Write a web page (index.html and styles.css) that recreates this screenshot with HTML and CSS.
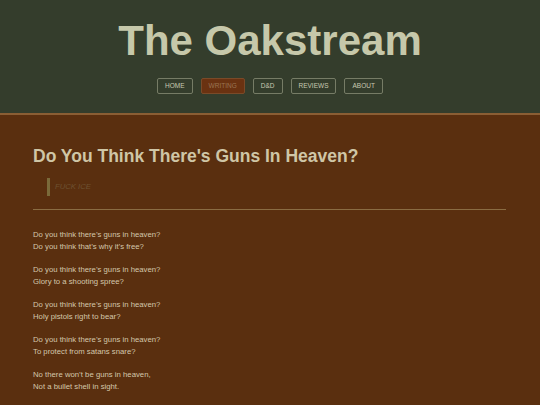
FILE: index.html
```html
<!DOCTYPE html>
<html lang="en">
<head>
<meta charset="utf-8">
<title>The Oakstream</title>
<link rel="stylesheet" href="styles.css">
</head>
<body>
<header class="site-header">
  <h1 class="site-title">The Oakstream</h1>
  <nav class="nav">
    <a class="nav-btn" href="#">HOME</a>
    <a class="nav-btn active" href="#">WRITING</a>
    <a class="nav-btn" href="#">D&amp;D</a>
    <a class="nav-btn" href="#">REVIEWS</a>
    <a class="nav-btn" href="#">ABOUT</a>
  </nav>
</header>
<main class="content">
  <h2 class="post-title">Do You Think There's Guns In Heaven?</h2>
  <blockquote class="post-quote">FUCK ICE</blockquote>
  <hr class="divider">
  <div class="poem">
    <p>Do you think there’s guns in heaven?<br>Do you think that’s why it’s free?</p>
    <p>Do you think there’s guns in heaven?<br>Glory to a shooting spree?</p>
    <p>Do you think there’s guns in heaven?<br>Holy pistols right to bear?</p>
    <p>Do you think there’s guns in heaven?<br>To protect from satans snare?</p>
    <p>No there won’t be guns in heaven,<br>Not a bullet shell in sight.</p>
  </div>
</main>
</body>
</html>
```
FILE: styles.css
```css
html, body {
  margin: 0;
  padding: 0;
}
body {
  font-family: "Liberation Sans", Arial, Helvetica, sans-serif;
  background: #5a2f0f;
  height: 405px;
  overflow: hidden;
}
.site-header {
  background: #343d2c;
  border-bottom: 2px solid #8a5e34;
  padding: 17px 0 19px;
  display: flex;
  flex-direction: column;
  align-items: center;
}
.site-title {
  margin: 0;
  font-size: 42px;
  line-height: 48px;
  font-weight: bold;
  color: #c6c8aa;
}
.nav {
  display: flex;
  gap: 8px;
  margin-top: 13px;
}
.nav-btn {
  display: block;
  height: 14px;
  line-height: 14px;
  padding: 0 7px;
  border: 1px solid #767c66;
  border-radius: 2px;
  font-size: 6.5px;
  color: #c8c9b2;
  text-decoration: none;
}
.nav-btn.active {
  background: #6a3211;
  border-color: #7a4a28;
  color: #9a7452;
}
.content {
  padding: 30px 34px 0 33px;
}
.post-title {
  margin: 0;
  font-size: 17.5px;
  line-height: 22px;
  font-weight: bold;
  color: #cfc6a6;
}
.post-quote {
  margin: 11px 0 0 14px;
  padding: 3px 0 3px 5px;
  border-left: 3px solid #7a6a3a;
  font-style: italic;
  font-size: 7.7px;
  line-height: 12px;
  color: #6e5232;
}
.divider {
  margin: 13px 0 0;
  border: 0;
  height: 1px;
  background: #8a6c42;
}
.poem {
  padding-top: 19px;
}
.poem p {
  margin: 0 0 11px;
  font-size: 7.75px;
  line-height: 12px;
  color: #d4c7ab;
}
```
